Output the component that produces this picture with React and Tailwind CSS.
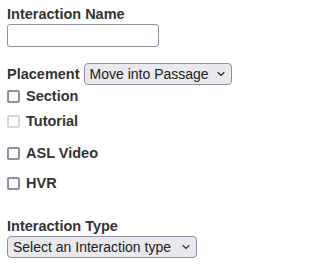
import React from "react";

const Chevron = () => (
  <svg
    className="pointer-events-none absolute right-[7px] top-1/2 -translate-y-1/2"
    width="8"
    height="5"
    viewBox="0 0 8 5"
    fill="none"
  >
    <path d="M1 1l3 3 3-3" stroke="#333" strokeWidth="1.2" strokeLinecap="round" strokeLinejoin="round" />
  </svg>
);

const Check = ({ label, disabled, className }) => (
  <label className={"flex items-center gap-[6px] h-[13px] " + className}>
    <input
      type="checkbox"
      disabled={disabled}
      className={
        "appearance-none w-[13px] h-[13px] rounded-[2px] border-2 bg-white " +
        (disabled ? "border-[#d5d5d9]" : "border-[#8f8f9d]")
      }
    />
    <span className="font-bold text-[14.5px] leading-[17px] text-[#333]">{label}</span>
  </label>
);

const App = () => {
  return (
    <div
      className="w-[243px] h-[269px] bg-white pl-[7px] pt-[6px] text-[#333]"
      style={{ fontFamily: '"Liberation Sans", Arial, sans-serif' }}
    >
      <div className="font-bold text-[14.5px] leading-[17px]">Interaction Name</div>
      <input
        type="text"
        className="mt-[1px] block w-[152px] h-[23px] border border-[#8f8f9d] rounded-[3px] bg-white"
      />

      <div className="flex items-baseline gap-[4px] mt-[15px]">
        <span className="font-bold text-[14.5px] leading-[17px]">Placement</span>
        <div className="relative">
          <select className="appearance-none w-[148px] h-[22px] pl-[5px] pr-[20px] text-[14px] leading-[20px] text-[#222] bg-[#e9e9ed] border border-[#8f8f9d] rounded-[4px]">
            <option>Move into Passage</option>
          </select>
          <Chevron />
        </div>
      </div>

      <Check label="Section" className="mt-[4px]" />
      <Check label="Tutorial" disabled className="mt-[12px]" />
      <Check label="ASL Video" className="mt-[19px]" />
      <Check label="HVR" className="mt-[17px]" />

      <div className="font-bold text-[14.5px] leading-[17px] mt-[28px]">Interaction Type</div>
      <div className="relative w-[190px]">
        <select className="appearance-none w-[190px] h-[22px] pl-[5px] pr-[20px] text-[14px] leading-[20px] text-[#222] bg-[#e9e9ed] border border-[#8f8f9d] rounded-[4px]">
          <option>Select an Interaction type</option>
        </select>
        <Chevron />
      </div>
    </div>
  );
};

export default App;
